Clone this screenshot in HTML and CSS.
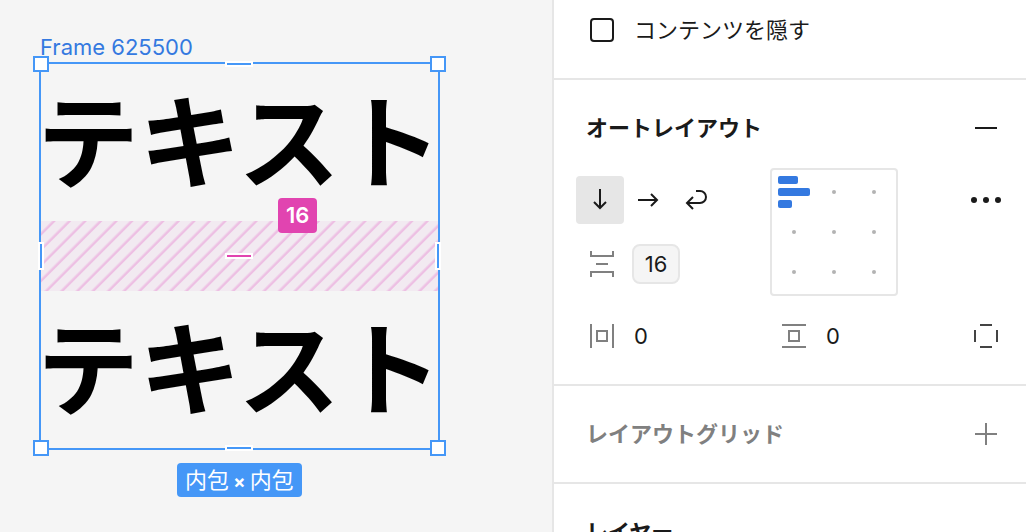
FILE: index.html
```html
<!DOCTYPE html>
<html lang="ja">
  <head>
    <meta charset="utf-8">
    <title>オートレイアウト</title>
    <link rel="stylesheet" href="styles.css">
  </head>
  <body>
    <main class="canvas">
      <div class="selection">
        <div class="frameName">Frame 625500</div>
        <div class="frame">
          <div class="frameText">テキスト</div>
          <div class="spacing">
            <span class="spacingBadge">16</span>
            <span class="grip gripSpacing"></span>
          </div>
          <div class="frameText">テキスト</div>

          <span class="grip gripTop"></span>
          <span class="grip gripBottom"></span>
          <span class="grip gripLeft"></span>
          <span class="grip gripRight"></span>
          <span class="handle handleTL"></span>
          <span class="handle handleTR"></span>
          <span class="handle handleBL"></span>
          <span class="handle handleBR"></span>
        </div>
        <div class="sizeBadge">内包<span class="times"> × </span>内包</div>
      </div>
    </main>

    <aside class="panel">
      <section class="section clipSection">
        <input id="clip" class="checkbox" type="checkbox">
        <label for="clip">コンテンツを隠す</label>
      </section>

      <section class="section">
        <div class="sectionHeader">
          <h2>オートレイアウト</h2>
          <button class="iconButton" type="button" aria-label="削除">
            <svg class="icon" width="24" height="24" viewBox="0 0 24 24"><path d="M1 12h22"/></svg>
          </button>
        </div>

        <div class="layoutRow">
          <div class="layoutLeft">
            <div class="directions">
              <button class="iconButton selected" type="button" aria-label="縦" aria-pressed="true">
                <svg class="icon" width="24" height="24" viewBox="0 0 24 24"><path d="M12 1v19.500M6 14l6 6 6-6"/></svg>
              </button>
              <button class="iconButton" type="button" aria-label="横" aria-pressed="false">
                <svg class="icon" width="24" height="24" viewBox="0 0 24 24"><path d="M2 12h19.500M15 6l6 6-6 6"/></svg>
              </button>
              <button class="iconButton" type="button" aria-label="折り返す" aria-pressed="false">
                <svg class="icon" width="24" height="24" viewBox="0 0 24 24"><path d="M12 3h4a6 6 0 0 1 0 12H3M9 9l-6 6 6 6"/></svg>
              </button>
            </div>
            <div class="field">
              <label for="gap" aria-label="間隔">
                <svg class="icon muted" width="24" height="26" viewBox="0 -1 24 26"><path d="M1-1v5h22v-5M6 12h12M1 25v-5h22v5"/></svg>
              </label>
              <input id="gap" class="numberBox" type="text" value="16">
            </div>
          </div>

          <div class="alignBox">
            <button class="alignCell alignActive" type="button" aria-label="左上">
              <span class="bar barMedium"></span>
              <span class="bar barLong"></span>
              <span class="bar barShort"></span>
            </button>
            <button class="alignCell" type="button" aria-label="上"><span class="dot"></span></button>
            <button class="alignCell" type="button" aria-label="右上"><span class="dot"></span></button>
            <button class="alignCell" type="button" aria-label="左"><span class="dot"></span></button>
            <button class="alignCell" type="button" aria-label="中央"><span class="dot"></span></button>
            <button class="alignCell" type="button" aria-label="右"><span class="dot"></span></button>
            <button class="alignCell" type="button" aria-label="左下"><span class="dot"></span></button>
            <button class="alignCell" type="button" aria-label="下"><span class="dot"></span></button>
            <button class="alignCell" type="button" aria-label="右下"><span class="dot"></span></button>
          </div>

          <div class="layoutMore">
            <button class="iconButton" type="button" aria-label="詳細">
              <svg class="dots" width="32" height="8" viewBox="0 0 32 8"><circle cx="4" cy="4" r="3"/><circle cx="16" cy="4" r="3"/><circle cx="28" cy="4" r="3"/></svg>
            </button>
          </div>
        </div>

        <div class="paddingRow">
          <div class="field">
            <label for="padH" aria-label="水平パディング">
              <svg class="icon muted" width="24" height="24" viewBox="0 0 24 24"><path d="M1 0v24M23 0v24M7 7h10v10H7z"/></svg>
            </label>
            <input id="padH" class="numberPlain" type="text" value="0">
          </div>
          <div class="field">
            <label for="padV" aria-label="垂直パディング">
              <svg class="icon muted" width="24" height="24" viewBox="0 0 24 24"><path d="M0 1h24M0 23h24M7 7h10v10H7z"/></svg>
            </label>
            <input id="padV" class="numberPlain" type="text" value="0">
          </div>
          <button class="iconButton" type="button" aria-label="個別パディング">
            <svg class="icon dark" width="24" height="24" viewBox="0 0 24 24"><path d="M6 1h12M6 23h12M1 6v12M23 6v12"/></svg>
          </button>
        </div>
      </section>

      <section class="section">
        <div class="sectionHeader">
          <h2 class="inactive">レイアウトグリッド</h2>
          <button class="iconButton" type="button" aria-label="追加">
            <svg class="icon muted" width="24" height="24" viewBox="0 0 24 24"><path d="M1 12h22M12 1v22"/></svg>
          </button>
        </div>
      </section>

      <section class="section">
        <div class="sectionHeader">
          <h2>レイヤー</h2>
        </div>
      </section>
    </aside>
  </body>
</html>
```
FILE: styles.css
```css
* {
  box-sizing: border-box;
}

body {
  margin: 0;
  height: 100vh;
  overflow: hidden;
  display: flex;
  background-color: #f5f5f5;
  color: #1a1a1a;
  font-family: Inter, "Noto Sans CJK JP", sans-serif;
  font-size: 22px;
}

button, input {
  margin: 0;
  padding: 0;
  border: none;
  background: none;
  color: inherit;
  font: inherit;
}

/* canvas */

.canvas {
  flex: 1;
  min-width: 0;
  padding: 34px 39px;
}

.selection {
  width: fit-content;
  display: flex;
  flex-direction: column;
}

.frameName {
  margin-bottom: 2px;
  padding-left: 1px;
  color: #3479e0;
  font-size: 22px;
  line-height: 26px;
}

.frame {
  position: relative;
  border: 2px solid #4597f7;
}

.frameText {
  margin: 0 -4px;
  padding-bottom: 12px;
  color: #000;
  font-family: "Noto Sans CJK JP", sans-serif;
  font-size: 102px;
  font-weight: bold;
  line-height: 145px;
  white-space: nowrap;
}

.spacing {
  position: relative;
  height: 70px;
  background: repeating-linear-gradient(135deg, #f2eaf1 0 7px, #edbfe3 9px 10px, #f2eaf1 11px);
}

.spacingBadge {
  position: absolute;
  top: -23px;
  left: 237px;
  padding: 0 8px;
  border-radius: 4px;
  background-color: #e144b0;
  color: #fff;
  font-weight: 600;
  line-height: 35px;
}

.sizeBadge {
  align-self: center;
  margin-top: 13px;
  padding: 0 8px;
  border-radius: 4px;
  background-color: #4597f7;
  color: #fff;
  line-height: 34px;
  white-space: pre;
}

.times {
  font-size: 18px;
  font-weight: bold;
  line-height: 18px;
}

.grip {
  position: absolute;
  border: 2px solid #fff;
  background-color: #4597f7;
}

.gripTop, .gripBottom, .gripSpacing {
  left: calc(50% - 14px);
  width: 28px;
  height: 6px;
}

.gripLeft, .gripRight {
  top: calc(50% - 14px);
  width: 6px;
  height: 28px;
}

.gripTop {
  top: -3px;
}

.gripBottom {
  bottom: -3px;
}

.gripLeft {
  left: -3px;
}

.gripRight {
  right: -3px;
}

.gripSpacing {
  top: calc(50% - 3px);
  background-color: #e144b0;
}

.handle {
  position: absolute;
  width: 16px;
  height: 16px;
  border: 2px solid #4597f7;
  background-color: #fff;
}

.handleTL, .handleTR {
  top: -8px;
}

.handleBL, .handleBR {
  bottom: -8px;
}

.handleTL, .handleBL {
  left: -8px;
}

.handleTR, .handleBR {
  right: -8px;
}

/* properties panel */

.panel {
  flex: none;
  width: 474px;
  border-left: 2px solid #e6e6e6;
  background-color: #fff;
}

.section {
  padding: 24px 16px 24px 22px;
  border-bottom: 2px solid #e6e6e6;
}

.clipSection {
  display: flex;
  align-items: center;
  gap: 20px;
  padding-top: 6px;
  padding-left: 36px;
  line-height: 48px;
}

.checkbox {
  appearance: none;
  width: 24px;
  height: 24px;
  border: 2px solid #1a1a1a;
  border-radius: 4px;
}

.checkbox:checked {
  background-color: #1a1a1a;
}

.sectionHeader {
  display: flex;
  align-items: center;
  justify-content: space-between;
  min-height: 48px;
  padding-left: 10px;
}

h2 {
  margin: 0;
  font-size: 22px;
  font-weight: bold;
  line-height: 32px;
}

h2.inactive {
  color: #808080;
}

.iconButton {
  display: flex;
  align-items: center;
  justify-content: center;
  width: 48px;
  height: 48px;
  border-radius: 4px;
}

.iconButton.selected {
  background-color: #e6e6e6;
}

.icon {
  display: block;
  fill: none;
  stroke: #1a1a1a;
  stroke-width: 2;
}

.icon.muted {
  stroke: #808080;
}

.icon.dark {
  stroke: #444;
}

.dots {
  fill: #1a1a1a;
}

.layoutRow {
  display: grid;
  grid-template-columns: 194px 128px 1fr;
  margin-top: 16px;
}

.layoutLeft {
  display: flex;
  flex-direction: column;
  gap: 16px;
  padding: 8px 0;
}

.directions {
  display: flex;
}

.layoutMore {
  display: flex;
  justify-content: flex-end;
  padding: 8px 0;
}

.field {
  display: flex;
  align-items: center;
  gap: 18px;
  height: 48px;
  padding-left: 14px;
}

.numberBox {
  width: 48px;
  height: 40px;
  border: 2px solid #e6e6e6;
  border-radius: 8px;
  background-color: #f5f5f5;
  text-align: center;
}

.numberPlain {
  width: 80px;
  height: 40px;
  padding-left: 2px;
}

.paddingRow {
  display: grid;
  grid-template-columns: 192px 192px 1fr;
  margin-top: 16px;
}

.paddingRow .iconButton {
  justify-self: end;
}

.alignBox {
  display: grid;
  grid-template-columns: repeat(3, 1fr);
  grid-template-rows: repeat(3, minmax(0, 1fr));
  height: 128px;
  padding: 2px;
  border: 2px solid #e6e6e6;
  border-radius: 4px;
}

.alignCell {
  display: flex;
  align-items: center;
  justify-content: center;
}

.alignActive {
  flex-direction: column;
  align-items: flex-start;
  gap: 4px;
  padding-left: 4px;
}

.dot {
  width: 4px;
  height: 4px;
  border-radius: 50%;
  background-color: #b3b3b3;
}

.bar {
  height: 8px;
  border-radius: 2px;
  background-color: #3479e0;
}

.barMedium {
  width: 20px;
}

.barLong {
  width: 32px;
}

.barShort {
  width: 14px;
}
```
